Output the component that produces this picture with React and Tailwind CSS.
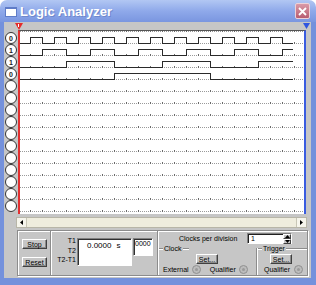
const ROWS = ['0', '1', '1', '0', '', '', '', '', '', '', '', '', '', '', '']
const END = 273

// toggle points for a 4 bit counter, in display pixels
const bit0 = []
for (let x = 10; x < END; x += 12) bit0.push(x)
const bit1 = [22, 46, 70, 94, 118, 142, 166, 190, 214, 238, 262]
const bit2 = [46, 94, 142, 190, 238]
const bit3 = [94, 190]
const waves = [bit0, bit1, bit2, bit3]

function wavePath(toggles, row) {
  const low = 12.5 + row * 12
  const high = 6.5 + row * 12
  let level = false
  let d = `M0 ${low}`
  toggles.forEach(x => {
    d += ` H${x + 0.5} V${level ? low : high}`
    level = !level
  })
  return d + ` H${END}`
}

function Btn({ children, className = '' }) {
  return (
    <div className={`flex items-center justify-center bg-[#c6c6c6] border border-t-white border-l-white border-r-[#404040] border-b-[#404040] shadow-[inset_-1px_-1px_0_#8a8a8a] text-[7px] leading-none ${className}`}>
      {children}
    </div>
  )
}

function Radio() {
  return (
    <div className="w-[9px] h-[9px] rounded-full bg-[#bcbcbc] border border-[#909090] flex items-center justify-center">
      <div className="w-[3px] h-[3px] rounded-full bg-[#9a9a9a]" />
    </div>
  )
}

function Etch({ className = '' }) {
  return <div className={`h-[2px] border-t border-t-[#8c8c8c] border-b border-b-white ${className}`} />
}

export default function App() {
  return (
    <div className="w-[316px] h-[285px] flex flex-col font-['Liberation_Sans',Arial,sans-serif] text-black select-none">
      <div className="h-[22px] flex items-center rounded-t-[7px] bg-gradient-to-b from-[#b2c7f3] via-[#8fa9ea] to-[#7a96e0] pl-[5px] pr-[6px]">
        <div className="w-[12px] h-[10px] mt-[1px] bg-white border border-[#5f7cc8] border-t-2" />
        <span className="ml-[3px] mt-[1px] text-[13px] font-bold text-white leading-none [text-shadow:1px_1px_0_#6f88cc]">Logic Analyzer</span>
        <div className="flex-1" />
        <div className="w-[15px] h-[16px] rounded-[2px] border border-[#ecd2d8] bg-gradient-to-b from-[#d99aa8] to-[#b85d71] flex items-center justify-center">
          <svg width="9" height="9" viewBox="0 0 9 9">
            <path d="M1 1 L8 8 M8 1 L1 8" stroke="#fff" strokeWidth="1.8" />
          </svg>
        </div>
      </div>

      <div className="flex-1 flex bg-[#7491dc] pl-[4px] pr-[5px] pb-[7px]">
        <div className="flex-1 flex flex-col bg-[#c6c6c6]">
          <div className="h-[8px] relative">
            <svg className="absolute left-[11px] top-[1px]" width="8" height="7" viewBox="0 0 8 7">
              <path d="M0 0 H8 L4 7 Z" fill="#e52a2a" />
              <path d="M3.5 1 V4" stroke="#fff" strokeWidth="1" />
            </svg>
            <svg className="absolute left-[299px] top-[1px]" width="7" height="6" viewBox="0 0 7 6">
              <path d="M0 0 H7 L3.5 6 Z" fill="#2f55e0" />
            </svg>
          </div>

          <div className="h-[184px] flex">
            <div className="w-[14px] flex flex-col items-center pt-[2px]">
              {ROWS.map((r, i) => (
                <div key={i} className="w-[12px] h-[12px] rounded-full border border-[#333] bg-white flex items-center justify-center text-[7px] leading-none font-bold text-[#222]">
                  {r}
                </div>
              ))}
            </div>
            <div className="w-[288px] bg-white border-t border-t-[#555] border-l-2 border-l-[#e23030] border-r-2 border-r-[#3a5ce0]">
              <svg width="284" height="183" viewBox="0 0 284 183" shapeRendering="crispEdges">
                <defs>
                  <pattern id="grid" x="10" y="1" width="12" height="12" patternUnits="userSpaceOnUse">
                    <rect x="0" y="10" width="1" height="2" fill="#6a6a6a" />
                    <rect x="2" y="11" width="1" height="1" fill="#9a9a9a" />
                    <rect x="4" y="11" width="1" height="1" fill="#9a9a9a" />
                    <rect x="6" y="11" width="1" height="1" fill="#9a9a9a" />
                    <rect x="8" y="11" width="1" height="1" fill="#9a9a9a" />
                    <rect x="10" y="11" width="1" height="1" fill="#9a9a9a" />
                  </pattern>
                </defs>
                <rect x="0" y="0" width="284" height="182" fill="url(#grid)" />
                {waves.map((w, i) => (
                  <path key={i} d={wavePath(w, i)} fill="none" stroke="#2a2a2a" strokeWidth="1" />
                ))}
              </svg>
            </div>
          </div>

          <div className="h-[3px]" />
          <div className="ml-[12px] w-[291px] h-[11px] flex bg-[#efedde] border border-[#b8b6a8]">
            <div className="w-[10px] flex items-center justify-center border-r border-r-[#c8c6b6] bg-[#f6f5ec]">
              <svg width="3" height="5" viewBox="0 0 3 5"><path d="M3 0 V5 L0 2.5 Z" fill="#000" /></svg>
            </div>
            <div className="flex-1" />
            <div className="w-[10px] flex items-center justify-center border-l border-l-[#c8c6b6] bg-[#f6f5ec]">
              <svg width="3" height="5" viewBox="0 0 3 5"><path d="M0 0 V5 L3 2.5 Z" fill="#000" /></svg>
            </div>
          </div>

          <div className="mt-[2px] ml-[13px] w-[291px] h-[46px] flex border border-[#8c8c8c] shadow-[inset_1px_1px_0_#fff,1px_1px_0_#fff]">
            <div className="w-[32px] flex flex-col items-start pl-[4px] pt-[8px] gap-[8px]">
              <Btn className="w-[25px] h-[10px]">Stop</Btn>
              <Btn className="w-[25px] h-[10px]">Reset</Btn>
            </div>
            <div className="w-[2px] border-l border-l-[#8c8c8c] border-r border-r-white" />

            <div className="w-[105px] flex items-start pt-[5px]">
              <div className="w-[24px] flex flex-col items-end text-[7px] leading-[9.5px]">
                <span>T1</span>
                <span>T2</span>
                <span>T2-T1</span>
              </div>
              <div className="mt-[2px] ml-[1px] w-[55px] h-[28px] bg-white border border-t-[#808080] border-l-[#808080] border-b-white border-r-white shadow-[inset_1px_1px_0_#303030] pl-[9px] pt-[2px] text-[8px] leading-[9px]">
                0.0000<span className="ml-[5px]">s</span>
              </div>
              <div className="mt-[2px] ml-[1px] w-[20px] h-[18px] bg-white border border-t-[#808080] border-l-[#808080] border-b-white border-r-white shadow-[inset_1px_1px_0_#303030] pl-[1px] pt-[1px] text-[7px] leading-[8px]">
                0000
              </div>
            </div>
            <div className="w-[2px] border-l border-l-[#8c8c8c] border-r border-r-white" />

            <div className="flex-1 flex flex-col">
              <div className="h-[14px] flex items-start pt-[2px]">
                <span className="ml-[20px] w-[68px] mt-[2px] text-[7px] leading-[8px]">Clocks per division</span>
                <div className="w-[45px] h-[11px] flex bg-white border border-t-[#808080] border-l-[#808080] border-b-white border-r-white shadow-[inset_1px_1px_0_#202020]">
                  <span className="flex-1 pl-[3px] pt-[1px] text-[7px] leading-[8px]">1</span>
                  <div className="w-[8px] flex flex-col">
                    <div className="flex-1 flex items-center justify-center bg-[#c6c6c6] border border-t-white border-l-white border-r-[#404040] border-b-[#404040]">
                      <svg width="5" height="3" viewBox="0 0 5 3"><path d="M0 3 H5 L2.5 0 Z" fill="#000" /></svg>
                    </div>
                    <div className="flex-1 flex items-center justify-center bg-[#c6c6c6] border border-t-white border-l-white border-r-[#404040] border-b-[#404040]">
                      <svg width="5" height="3" viewBox="0 0 5 3"><path d="M0 0 H5 L2.5 3 Z" fill="#000" /></svg>
                    </div>
                  </div>
                </div>
              </div>

              <div className="flex-1 flex">
                <div className="w-[97px] flex flex-col">
                  <div className="h-[7px] flex items-center">
                    <Etch className="w-[4px]" />
                    <span className="px-[1px] text-[7px] leading-none">Clock</span>
                    <Etch className="w-[6px]" />
                  </div>
                  <Btn className="ml-[37px] mt-[2px] w-[22px] h-[10px]">Set...</Btn>
                  <div className="mt-[1px] flex items-center text-[7px] leading-none">
                    <span className="ml-[4px]">External</span>
                    <div className="ml-[3px]"><Radio /></div>
                    <span className="ml-[9px]">Qualifier</span>
                    <div className="ml-[3px]"><Radio /></div>
                  </div>
                </div>
                <div className="w-[2px] mt-[3px] border-l border-l-[#8c8c8c] border-r border-r-white" />
                <div className="flex-1 flex flex-col">
                  <div className="h-[7px] flex items-center">
                    <Etch className="w-[4px]" />
                    <span className="px-[1px] text-[7px] leading-none">Trigger</span>
                    <Etch className="flex-1" />
                  </div>
                  <Btn className="ml-[12px] mt-[2px] w-[22px] h-[10px]">Set...</Btn>
                  <div className="mt-[1px] flex items-center text-[7px] leading-none">
                    <span className="ml-[6px]">Qualifier</span>
                    <div className="ml-[4px]"><Radio /></div>
                  </div>
                </div>
              </div>
            </div>
          </div>
        </div>
      </div>
    </div>
  )
}
